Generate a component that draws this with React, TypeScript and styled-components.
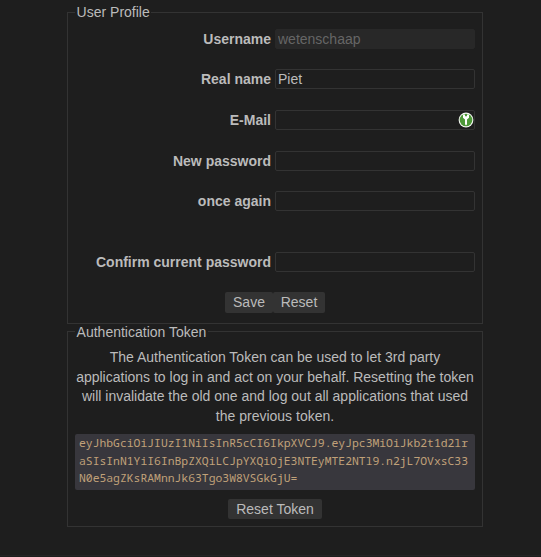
import React from 'react';
import styled, { createGlobalStyle } from 'styled-components';

const GlobalStyle = createGlobalStyle`
  * { box-sizing: border-box; }
  body {
    margin: 0;
    background: #1e1e1e;
    color: #bbb;
    font: 14px/19.6px "Liberation Sans", Arial, sans-serif;
    overflow: hidden;
  }
`;

const Page = styled.main`
  width: 541px;
  height: 556px;
  padding: 2px 58px 0 67px;
  border-bottom: 1px solid #242424;
`;

const Panel = styled.fieldset<{ $height: number; $offset?: number }>`
  width: 416px;
  height: ${(p) => p.$height}px;
  margin: ${(p) => p.$offset ?? 0}px 0 0;
  padding: 0 7px;
  border: 1px solid #333;
  text-align: center;
`;

const Legend = styled.legend<{ $height?: number }>`
  height: ${(p) => p.$height ?? 20}px;
  margin: 0 auto 0 0;
  padding: 0 1.6px;
  line-height: 20px;
`;

const Fields = styled.div`
  padding-top: 6.8px;
`;

const Row = styled.label<{ $gap?: number }>`
  display: flex;
  align-items: flex-start;
  justify-content: flex-end;
  gap: 4px;
  height: 40.6px;
  margin-top: ${(p) => p.$gap ?? 0}px;
  font-weight: bold;
  line-height: 21.6px;
`;

const InputWrap = styled.span`
  position: relative;
  display: block;
  width: 200px;
  height: 20px;
`;

const Input = styled.input`
  display: block;
  width: 200px;
  height: 20px;
  margin: 0;
  padding: 0 2px;
  border: 1px solid #333;
  border-radius: 2px;
  background: #1e1e1e;
  color: #bbb;
  font: 14px/18px "Liberation Sans", Arial, sans-serif;
  &:disabled {
    border-color: #282828;
    background: #282828;
    color: #666;
  }
`;

const KeyBadge = styled.svg`
  position: absolute;
  top: 2px;
  right: 1px;
  width: 16px;
  height: 16px;
`;

const Actions = styled.div`
  display: flex;
  justify-content: center;
`;

const Button = styled.button<{ $width: number; $height?: number }>`
  width: ${(p) => p.$width}px;
  height: ${(p) => p.$height ?? 20}px;
  padding: 0 0 ${(p) => (p.$height ?? 20) - 20}px;
  border: 0;
  border-radius: 2px;
  background: #333;
  color: #bbb;
  font: 14px/20px "Liberation Sans", Arial, sans-serif;
`;

const Description = styled.p`
  margin: 7px 0 8px;
`;

const Token = styled.code`
  display: block;
  width: 400px;
  height: 56px;
  margin-bottom: 9px;
  padding: 0 4px;
  border-radius: 2px;
  background: #38373d;
  color: #c0a179;
  font: 11.38px/17.5px "Noto Sans Mono", "DejaVu Sans Mono", monospace;
  text-align: left;
  overflow-wrap: anywhere;
`;

function KeyIcon() {
  return (
    <KeyBadge viewBox="0 0 16 16">
      <circle cx="8" cy="8" r="7.4" fill="#f4f6f2" />
      <circle cx="8" cy="8" r="6.3" fill="#4d9838" />
      <path d="M5 2.6h2v1.6h2V2.6h2v3.2L9 7.5v4.7l-1 1.3-1-1.3V7.5L5 5.8z" fill="#fff" />
    </KeyBadge>
  );
}

export default function App() {
  return (
    <>
      <GlobalStyle />
      <Page>
        <Panel $height={322}>
          <Legend>User Profile</Legend>
          <Fields>
            <Row>Username<Input defaultValue="wetenschaap" disabled /></Row>
            <Row>Real name<Input defaultValue="Piet" /></Row>
            <Row>
              E-Mail
              <InputWrap><Input type="email" /><KeyIcon /></InputWrap>
            </Row>
            <Row>New password<Input type="password" /></Row>
            <Row>once again<Input type="password" /></Row>
            <Row $gap={20}>Confirm current password<Input type="password" /></Row>
            <Actions>
              <Button $width={48} $height={21}>Save</Button>
              <Button $width={52} $height={21}>Reset</Button>
            </Actions>
          </Fields>
        </Panel>
        <Panel $height={205} $offset={-2}>
          <Legend $height={19}>Authentication Token</Legend>
          <Description>
            The Authentication Token can be used to let 3rd party applications to log in and act on your
            behalf. Resetting the token will invalidate the old one and log out all applications that used
            the previous token.
          </Description>
          <Token>
            eyJhbGciOiJIUzI1NiIsInR5cCI6IkpXVCJ9.eyJpc3MiOiJkb2t1d2lr<wbr />aSIsInN1YiI6InBpZXQiLCJpYXQiOjE3NTEyMTE2NTl9.n2jL7OVxsC33<wbr />N0e5agZKsRAMnnJk63Tgo3W8VSGkGjU=
          </Token>
          <Actions>
            <Button $width={94}>Reset Token</Button>
          </Actions>
        </Panel>
      </Page>
    </>
  );
}
